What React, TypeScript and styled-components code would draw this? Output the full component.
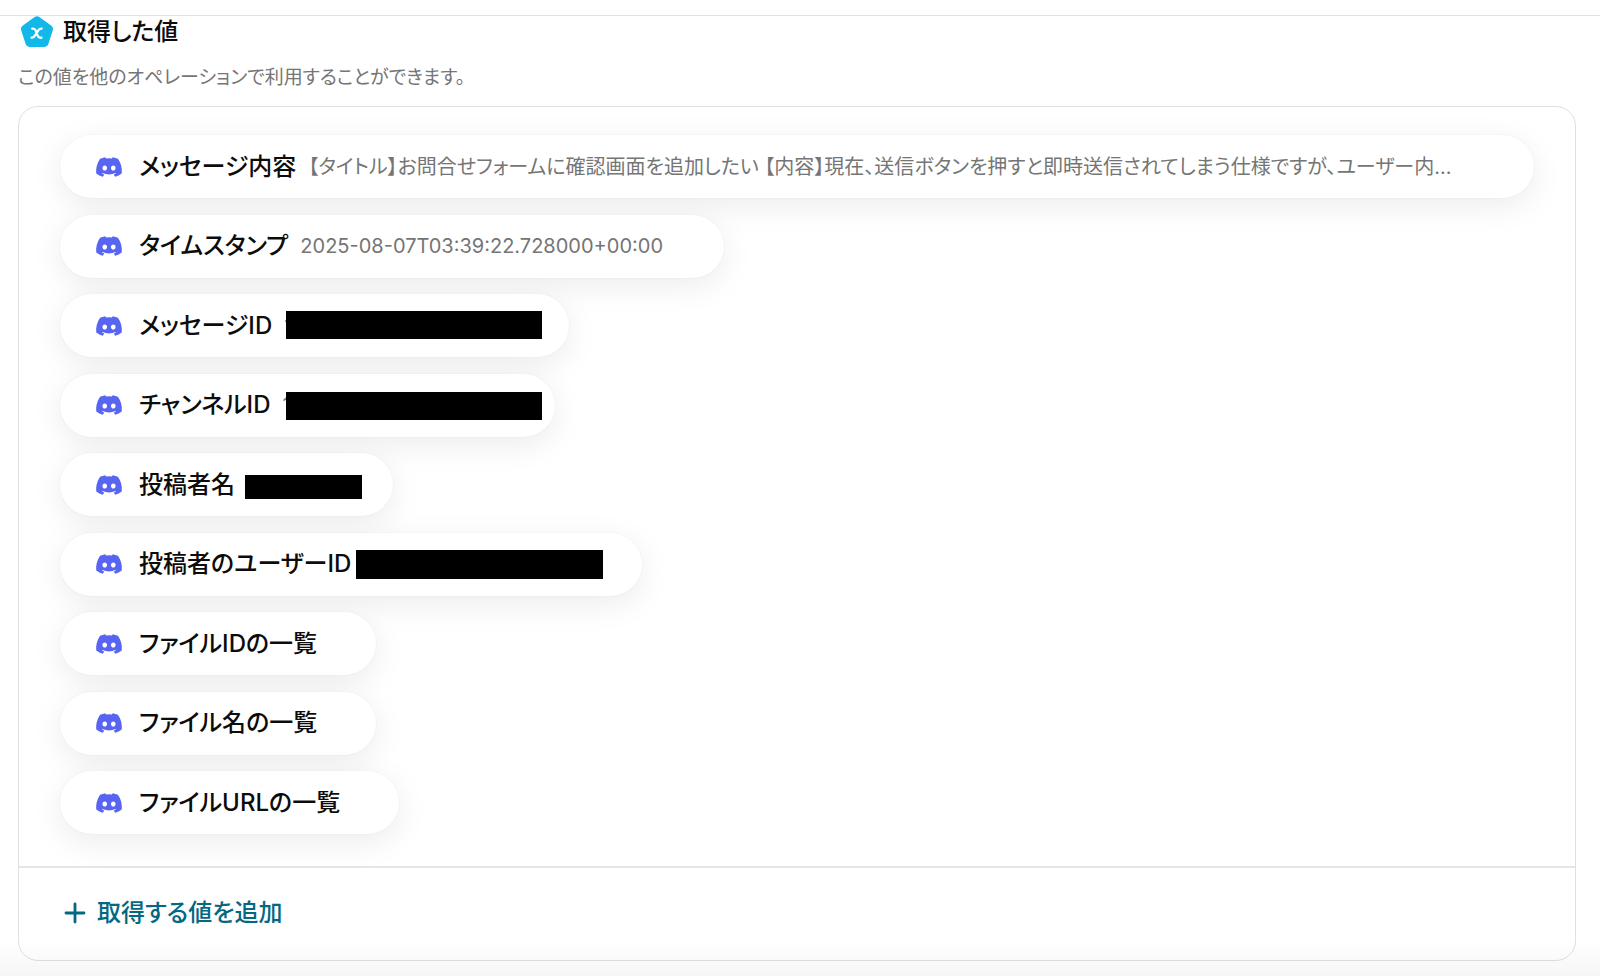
import React from "react";
import styled, { createGlobalStyle } from "styled-components";
import { FaDiscord } from "react-icons/fa";

const GlobalStyle = createGlobalStyle`
  *, *::before, *::after { box-sizing: border-box; }
  body {
    margin: 0;
    background: #fff;
    color: #0c0c0c;
    font-family: Inter, "Noto Sans CJK JP", sans-serif;
    font-feature-settings: "palt";
  }
`;

const TopRule = styled.div`
  height: 16px;
  border-bottom: 1px solid #e2e2e2;
`;

const Section = styled.main`
  padding: 0 24px 16px 18px;
`;

const Heading = styled.header`
  display: flex;
  align-items: flex-start;
  gap: 10px;
  height: 32px;
  padding-left: 3px;
`;

const Title = styled.h1`
  margin: 0;
  font-size: 24px;
  line-height: 32px;
  font-weight: 500;
`;

const Description = styled.p`
  margin: 16px 0 14px;
  font-size: 19px;
  line-height: 28px;
  color: #757575;
`;

const Card = styled.section`
  border: 1px solid #e0e0e0;
  border-radius: 20px;
`;

const ValueList = styled.ul`
  display: flex;
  flex-direction: column;
  align-items: flex-start;
  justify-content: space-between;
  min-height: 759px;
  margin: 0;
  padding: 28px 41px 32px 41px;
  list-style: none;
`;

const Pill = styled.li<{ $full?: boolean }>`
  display: flex;
  align-items: center;
  width: ${(p) => (p.$full ? "100%" : "auto")};
  height: 63px;
  padding: 0 47px 0 35px;
  border-radius: 32px;
  background: #fff;
  box-shadow: 0 8px 32px rgba(0, 0, 0, 0.08), 0 0 2px rgba(0, 0, 0, 0.06);
`;

const ServiceIcon = styled(FaDiscord)`
  flex: none;
  width: 28px;
  height: 28px;
  color: #5865f2;
`;

const Label = styled.span`
  flex: none;
  margin: 0 12px 0 16px;
  font-size: 24px;
  line-height: 32px;
  font-weight: 500;
`;

const Value = styled.span<{ $width?: number }>`
  position: relative;
  width: ${(p) => (p.$width ? `${p.$width}px` : "auto")};
  font-size: 20px;
  line-height: 32px;
  color: #757575;
  white-space: nowrap;
`;

const Redaction = styled.span<{ $left: number; $top: number; $width: number; $height: number }>`
  position: absolute;
  left: ${(p) => p.$left}px;
  top: ${(p) => p.$top}px;
  width: ${(p) => p.$width}px;
  height: ${(p) => p.$height}px;
  background: #000;
`;

const CardFooter = styled.footer`
  display: flex;
  align-items: center;
  height: 94px;
  padding: 0 44px 2px;
  border-top: 2px solid #e6e6e6;
`;

const AddButton = styled.button`
  display: flex;
  align-items: center;
  gap: 10px;
  padding: 0;
  border: 0;
  background: none;
  color: #036881;
  font: inherit;
  font-feature-settings: inherit;
  font-size: 24px;
  line-height: 32px;
  font-weight: 500;
  cursor: pointer;
`;

const BottomShade = styled.div`
  position: fixed;
  right: 0;
  bottom: 0;
  left: 0;
  height: 36px;
  background: linear-gradient(rgba(0, 0, 0, 0), rgba(0, 0, 0, 0.035));
  pointer-events: none;
`;

type Item = {
  label: string;
  value?: string;
  full?: boolean;
  space?: number;
  hidden?: { left: number; top: number; width: number; height: number };
};

const items: Item[] = [
  {
    label: "メッセージ内容",
    value:
      "【タイトル】お問合せフォームに確認画面を追加したい 【内容】現在、送信ボタンを押すと即時送信されてしまう仕様ですが、ユーザー内...",
    full: true,
  },
  { label: "タイムスタンプ", value: "2025-08-07T03:39:22.728000+00:00", space: 377 },
  { label: "メッセージID", value: "1", space: 238, hidden: { left: 2, top: 1, width: 256, height: 28 } },
  { label: "チャンネルID", value: "1", space: 226, hidden: { left: 4, top: 3, width: 256, height: 28 } },
  { label: "投稿者名", space: 99, hidden: { left: -2, top: 6, width: 117, height: 24 } },
  { label: "投稿者のユーザーID", space: 232, hidden: { left: -7, top: 2, width: 247, height: 29 } },
  { label: "ファイルIDの一覧" },
  { label: "ファイル名の一覧" },
  { label: "ファイルURLの一覧" },
];

const PentagonIcon = () => (
  <svg width="32" height="32" viewBox="0 0 32 32" aria-hidden="true">
    <path
      d="M13.6 1.1a4 4 0 0 1 4.8 0l12 8.7a4 4 0 0 1 1.4 4.4l-4.5 14.1a4 4 0 0 1-3.8 2.7H8.5a4 4 0 0 1-3.8-2.7L.2 14.2a4 4 0 0 1 1.4-4.4z"
      fill="#12b8e8"
    />
    <path
      d="M11.2 12.6c1.8-.3 2.8.3 3.4 1.8l2.2 5.4c.6 1.6 1.7 2.2 3.6 1.9M20.6 12.6c-1.5-.1-2.4.4-3.3 1.7l-3.6 5.6c-.8 1.3-1.7 1.9-3.1 1.8"
      fill="none"
      stroke="#fff"
      strokeWidth="2.3"
      strokeLinecap="round"
    />
  </svg>
);

const PlusIcon = () => (
  <svg width="24" height="24" viewBox="0 0 24 24" aria-hidden="true">
    <path d="M12 3v18M3 12h18" stroke="currentColor" strokeWidth="2.8" strokeLinecap="round" />
  </svg>
);

export default function App() {
  return (
    <>
      <GlobalStyle />
      <TopRule />
      <Section>
        <Heading>
          <PentagonIcon />
          <Title>取得した値</Title>
        </Heading>
        <Description>この値を他のオペレーションで利用することができます。</Description>
        <Card>
          <ValueList>
            {items.map(({ label, value, full, space, hidden }) => (
              <Pill key={label} $full={full}>
                <ServiceIcon aria-hidden="true" />
                <Label>{label}</Label>
                <Value $width={space}>
                  {hidden ? value ?? "\u00a0" : value}
                  {hidden && (
                    <Redaction $left={hidden.left} $top={hidden.top} $width={hidden.width} $height={hidden.height} />
                  )}
                </Value>
              </Pill>
            ))}
          </ValueList>
          <CardFooter>
            <AddButton type="button">
              <PlusIcon />
              取得する値を追加
            </AddButton>
          </CardFooter>
        </Card>
      </Section>
      <BottomShade />
    </>
  );
}
